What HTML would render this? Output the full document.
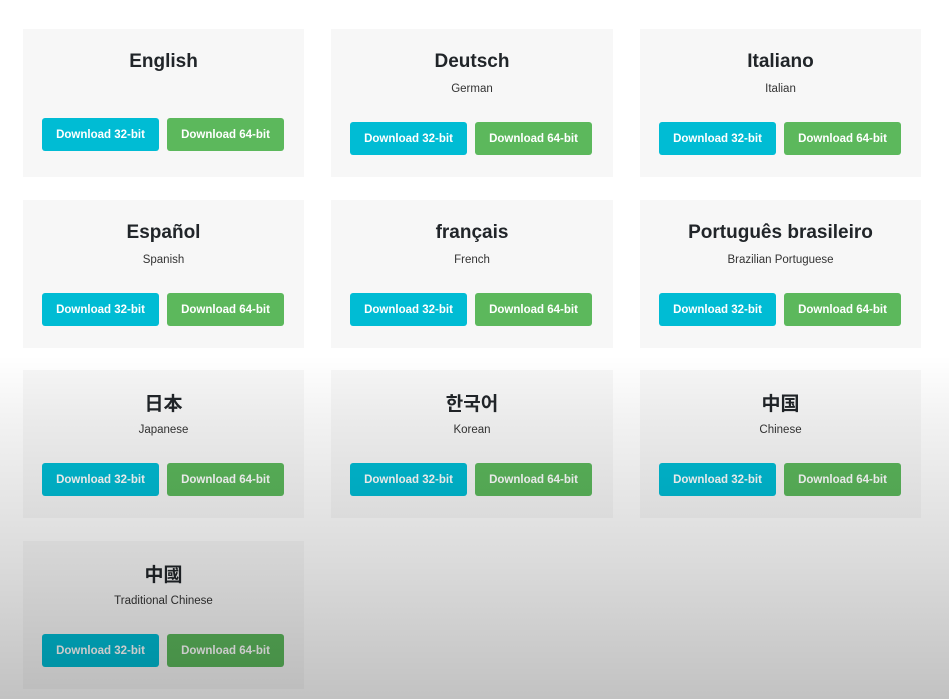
<!DOCTYPE html>
<html><head><meta charset="utf-8"><style>
html,body{margin:0;padding:0;width:949px;height:699px;overflow:hidden;background:#fff;font-family:"Liberation Sans","Noto Sans CJK SC",sans-serif;}
.card{position:absolute;width:281px;height:148px;background:#f7f7f7;text-align:center;color:#212529;}
.t{position:absolute;left:0;right:0;top:21px;font-size:19px;font-weight:bold;line-height:24px;}
.s{position:absolute;left:0;right:0;top:53px;font-size:11.5px;line-height:14px;color:#333;}
.b{position:absolute;top:93px;width:117px;height:33px;border-radius:3px;color:#fff;font-size:11.5px;font-weight:bold;line-height:34px;text-align:center;}
.b1{left:19px;background:#00bcd4;}
.b2{left:144px;background:#5cb85c;}
.ov{position:absolute;left:0;top:0;width:949px;height:699px;pointer-events:none;background:linear-gradient(to bottom,rgba(0,0,0,0) 0,rgba(0,0,0,0) 355px,rgba(0,0,0,0.05) 420px,rgba(0,0,0,0.14) 560px,rgba(0,0,0,0.24) 699px);}
</style></head><body>
<div class="card" style="left:23px;top:29px"><div class="t">English</div><div class="b b1" style="top:89px">Download 32-bit</div><div class="b b2" style="top:89px">Download 64-bit</div></div>
<div class="card" style="left:331px;top:29px;width:282px"><div class="t">Deutsch</div><div class="s">German</div><div class="b b1">Download 32-bit</div><div class="b b2">Download 64-bit</div></div>
<div class="card" style="left:640px;top:29px"><div class="t">Italiano</div><div class="s">Italian</div><div class="b b1">Download 32-bit</div><div class="b b2">Download 64-bit</div></div>

<div class="card" style="left:23px;top:200px"><div class="t">Español</div><div class="s">Spanish</div><div class="b b1">Download 32-bit</div><div class="b b2">Download 64-bit</div></div>
<div class="card" style="left:331px;top:200px;width:282px"><div class="t">français</div><div class="s">French</div><div class="b b1">Download 32-bit</div><div class="b b2">Download 64-bit</div></div>
<div class="card" style="left:640px;top:200px"><div class="t">Português brasileiro</div><div class="s">Brazilian Portuguese</div><div class="b b1">Download 32-bit</div><div class="b b2">Download 64-bit</div></div>

<div class="card" style="left:23px;top:370px"><div class="t" style="font-family:'Noto Sans CJK JP',sans-serif">日本</div><div class="s">Japanese</div><div class="b b1">Download 32-bit</div><div class="b b2">Download 64-bit</div></div>
<div class="card" style="left:331px;top:370px;width:282px"><div class="t" style="font-family:'Noto Sans CJK KR',sans-serif">한국어</div><div class="s">Korean</div><div class="b b1">Download 32-bit</div><div class="b b2">Download 64-bit</div></div>
<div class="card" style="left:640px;top:370px"><div class="t" style="font-family:'Noto Sans CJK SC',sans-serif">中国</div><div class="s">Chinese</div><div class="b b1">Download 32-bit</div><div class="b b2">Download 64-bit</div></div>

<div class="card" style="left:23px;top:541px"><div class="t" style="font-family:'Noto Sans CJK TC',sans-serif">中國</div><div class="s">Traditional Chinese</div><div class="b b1">Download 32-bit</div><div class="b b2">Download 64-bit</div></div>
<div class="ov"></div>
</body></html>
